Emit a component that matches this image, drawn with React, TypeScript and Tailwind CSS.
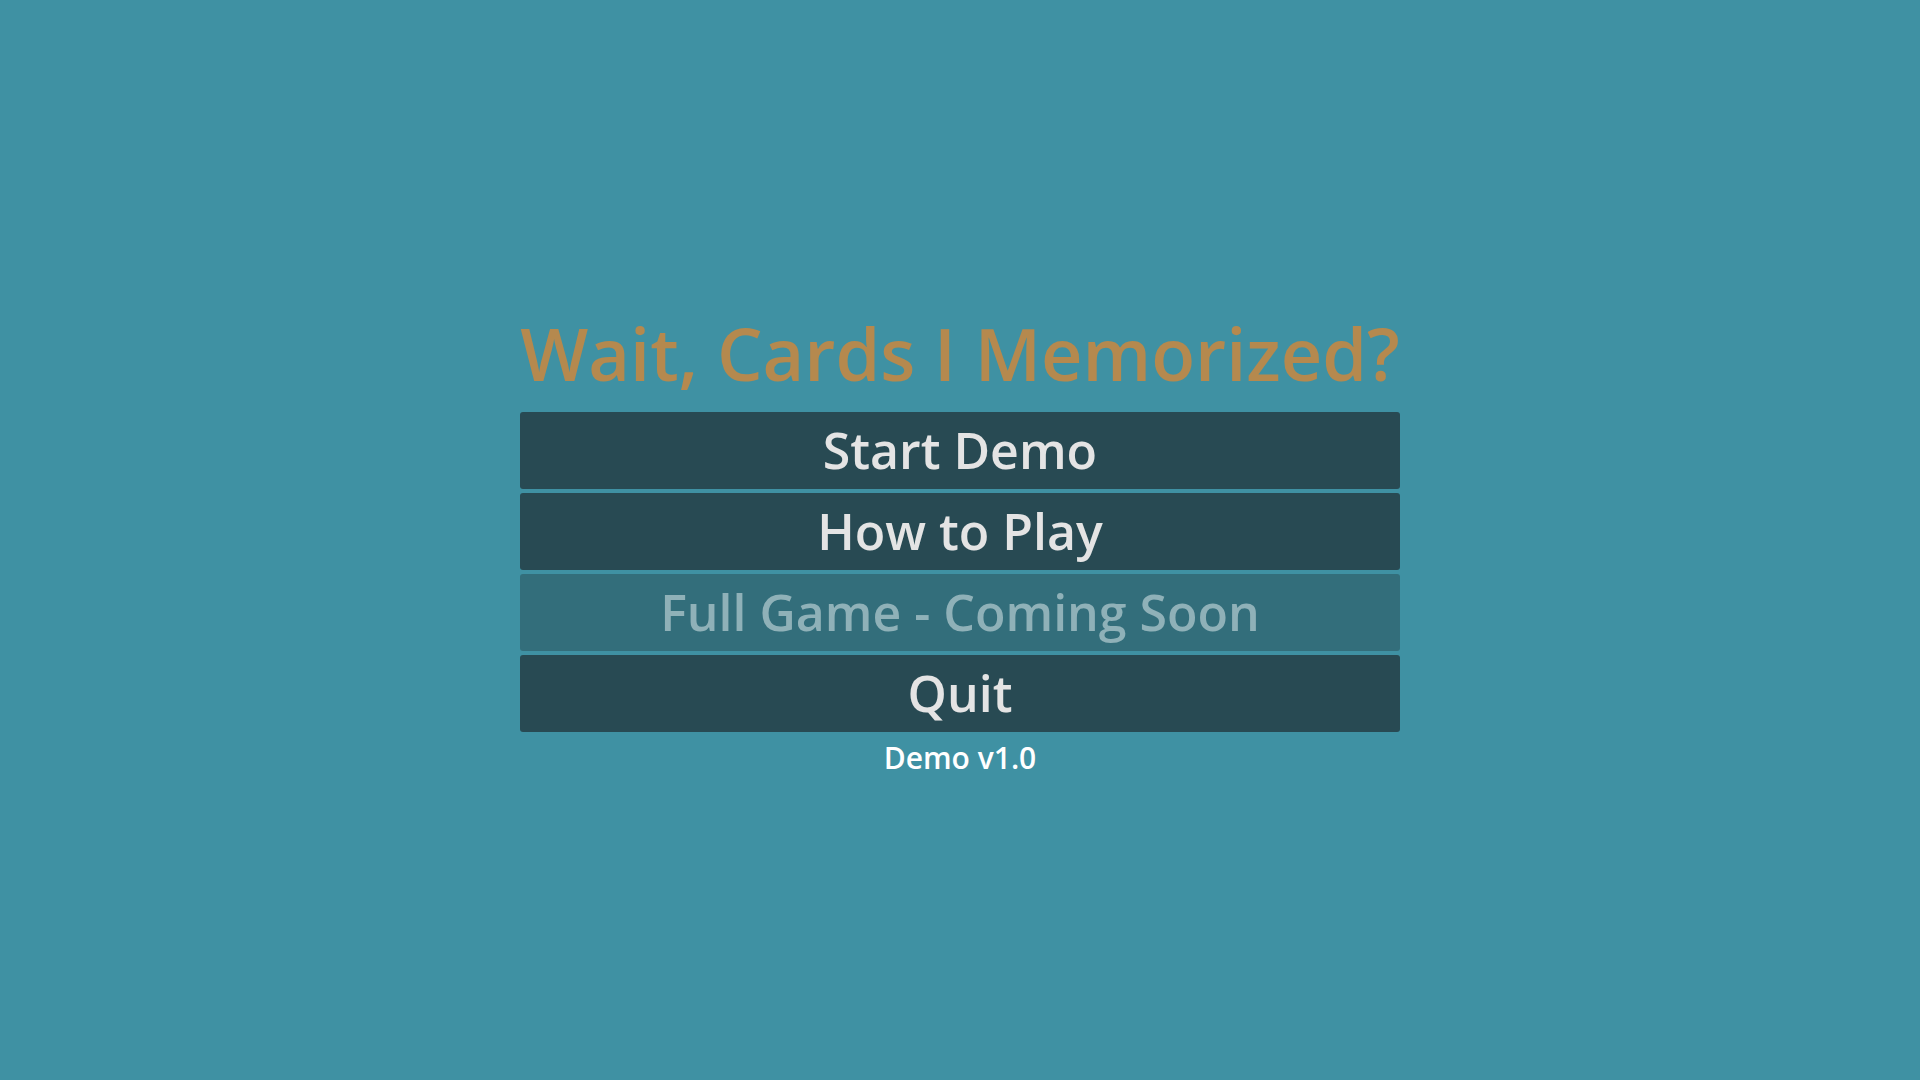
const BUTTONS: { label: string; disabled?: boolean }[] = [
  { label: "Start Demo" },
  { label: "How to Play" },
  { label: "Full Game - Coming Soon", disabled: true },
  { label: "Quit" },
]

export default function App() {
  return (
    <div
      className="flex h-screen w-full items-center justify-center bg-[#3f91a3]"
      style={{ fontFamily: '"Open Sans", "Noto Sans", sans-serif' }}
    >
      <div className="flex w-[880px] flex-col items-stretch">
        <h1 className="mb-[9px] text-center text-[72px] leading-[100px] font-semibold whitespace-nowrap text-[#b5894e]">
          Wait, Cards I Memorized?
        </h1>
        <div className="flex flex-col gap-[4px]">
          {BUTTONS.map((b) => (
            <button
              key={b.label}
              disabled={b.disabled}
              className={
                b.disabled
                  ? "h-[77px] rounded-[3px] bg-[#336e7b] text-[50px] leading-none font-semibold text-[#8fb1b8]"
                  : "h-[77px] rounded-[3px] bg-[#284a53] text-[50px] leading-none font-semibold text-[#e4e4e4]"
              }
            >
              {b.label}
            </button>
          ))}
        </div>
        <div className="mt-[6px] text-center text-[30px] leading-[40px] font-semibold text-white">
          Demo v1.0
        </div>
      </div>
    </div>
  )
}
